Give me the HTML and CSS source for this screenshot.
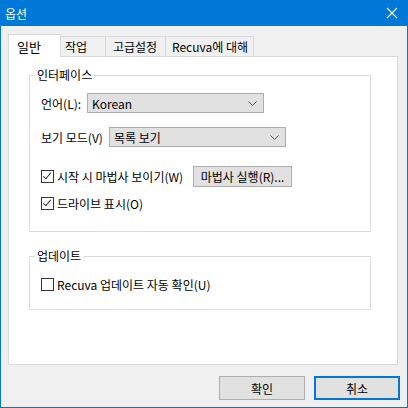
FILE: index.html
```html
<!DOCTYPE html>
<html>
<head>
    <title>옵션</title>
    <link rel="stylesheet" href="styles.css">
</head>
<body>
    <div class="window">
        <div class="titlebar">
            <span class="title">옵션</span>
            <svg class="close" width="12" height="12" viewBox="0 0 12 12">
                <path d="M1 1 L11 11 M11 1 L1 11" stroke="#fff" stroke-width="1.1" fill="none"/>
            </svg>
        </div>

        <div class="content">
            <!-- tab strip -->
            <div class="tabs">
                <div class="tab selected">일반</div>
                <div class="tab">작업</div>
                <div class="tab">고급설정</div>
                <div class="tab">Recuva에 대해</div>
            </div>

            <div class="panel">
                <fieldset class="group group-ui">
                    <legend>인터페이스</legend>
                    <div class="row row-lang">
                        <span class="label label-lang">언어(L):</span>
                        <div class="combo">
                            <span>Korean</span>
                            <svg width="9" height="5" viewBox="0 0 9 5"><path d="M0.5 0.5 L4.5 4.5 L8.5 0.5" stroke="#555" fill="none"/></svg>
                        </div>
                    </div>
                    <div class="row row-view">
                        <span class="label label-view">보기 모드(V)</span>
                        <div class="combo">
                            <span>목록 보기</span>
                            <svg width="9" height="5" viewBox="0 0 9 5"><path d="M0.5 0.5 L4.5 4.5 L8.5 0.5" stroke="#555" fill="none"/></svg>
                        </div>
                    </div>
                    <div class="row row-wizard">
                        <span class="check checked"></span>
                        <span class="check-text">시작 시 마법사 보이기(W)</span>
                        <button class="btn btn-wizard">마법사 실행(R)...</button>
                    </div>
                    <div class="row row-drive">
                        <span class="check checked"></span>
                        <span class="check-text">드라이브 표시(O)</span>
                    </div>
                </fieldset>

                <fieldset class="group group-update">
                    <legend>업데이트</legend>
                    <div class="row row-drive">
                        <span class="check"></span>
                        <span class="check-text">Recuva 업데이트 자동 확인(U)</span>
                    </div>
                </fieldset>
            </div>

            <div class="actions">
                <button class="btn btn-action">확인</button>
                <button class="btn btn-action default">취소</button>
            </div>
        </div>
    </div>
</body>
</html>
```

FILE: styles.css
```css
html, body {
    margin: 0;
    padding: 0;
}

body {
    font-family: "Noto Sans CJK KR", "Noto Sans", sans-serif;
    font-size: 12px;
    color: #000;
}

.window {
    width: 408px;
    height: 408px;
    box-sizing: border-box;
    border: 1px solid #0078d7;
    border-top: none;
    background-color: #f0f0f0;
    display: flex;
    flex-direction: column;
}

.titlebar {
    height: 26px;
    background-color: #0078d7;
    color: #fff;
    display: flex;
    align-items: center;
    justify-content: space-between;
    padding: 0 9px 0 4px;
    flex-shrink: 0;
}

.title {
    font-size: 12px;
}

/* tabs + panel */
.content {
    padding: 8px 0 0 7px;
}

.tabs {
    display: flex;
    align-items: flex-end;
    height: 22px;
    position: relative;
    z-index: 1;
}

.tab {
    height: 20px;
    box-sizing: border-box;
    border: 1px solid #d9d9d9;
    border-bottom: none;
    border-left: none;
    padding: 0 4px 0 4px;
    display: flex;
    align-items: center;
    white-space: nowrap;
}

.tab.selected {
    height: 23px;
    margin-bottom: -1px;
    background-color: #fff;
    border-left: 1px solid #d9d9d9;
    padding: 0 19px 0 8px;
    font-size: 13px;
    align-items: flex-start;
    padding-top: 2px;
}

.tab:nth-child(2) {
    width: 45px;
}

.tab:nth-child(3) {
    width: 60px;
    padding-left: 7px;
}

.tab:nth-child(4) {
    width: 88px;
    padding-left: 6px;
}

.panel {
    width: 390px;
    height: 309px;
    box-sizing: border-box;
    background-color: #fff;
    border: 1px solid #d9d9d9;
    padding: 10px 0 0 20px;
}

.group {
    width: 342px;
    box-sizing: border-box;
    margin: 0;
    border: 1px solid #dcdcdc;
    padding: 10px 10px 0 11px;
}

.group legend {
    padding: 0 2px;
    margin-left: -6px;
    line-height: 16px;
}

.group-ui {
    height: 165px;
}

.group-update {
    margin-top: 16px;
    height: 62px;
}

.row {
    display: flex;
    align-items: center;
    height: 20px;
}

.row-view {
    margin-top: 14px;
}

.row-wizard {
    margin-top: 19px;
    height: 21px;
}

.row-drive {
    margin-top: 6px;
}

.group-update .row-drive {
    margin-top: 0;
}

.label-lang {
    width: 46px;
}

.label-view {
    width: 68px;
}

.combo {
    width: 177px;
    height: 20px;
    box-sizing: border-box;
    background-color: #e1e1e1;
    border: 1px solid #adadad;
    display: flex;
    align-items: center;
    justify-content: space-between;
    padding: 0 6px 0 4px;
}

.check {
    width: 13px;
    height: 13px;
    box-sizing: border-box;
    border: 1px solid #333;
    background-color: #fff;
    margin-right: 3px;
    position: relative;
}

.check.checked::after {
    content: "";
    position: absolute;
    left: 3px;
    top: 0px;
    width: 3px;
    height: 7px;
    border-right: 1.5px solid #333;
    border-bottom: 1.5px solid #333;
    transform: rotate(40deg);
}

.btn {
    font-family: inherit;
    font-size: 12px;
    color: #000;
    background-color: #e1e1e1;
    border: 1px solid #adadad;
    padding: 0;
    margin: 0;
}

.btn-wizard {
    width: 99px;
    height: 21px;
    margin-left: 10px;
}

.actions {
    display: flex;
    justify-content: flex-end;
    gap: 9px;
    padding: 11px 7px 0 0;
}

.btn-action {
    width: 86px;
    height: 24px;
}

.btn-action.default {
    border: 2px solid #0078d7;
}
```
